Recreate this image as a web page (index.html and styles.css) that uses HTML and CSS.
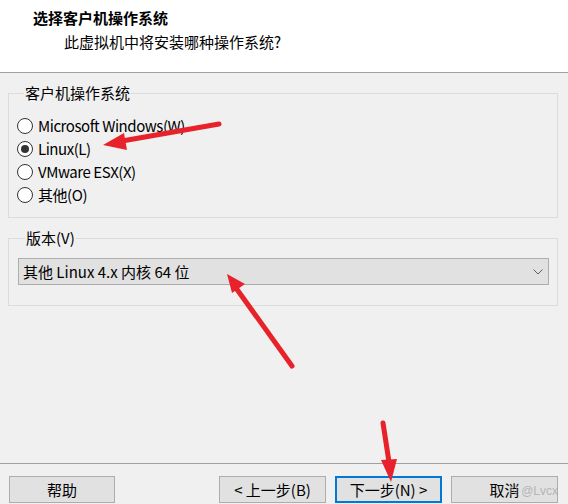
FILE: index.html
```html
<!DOCTYPE html>
<html lang="zh">
<head>
<meta charset="utf-8">
<title>选择客户机操作系统</title>
<link rel="stylesheet" href="styles.css">
</head>
<body>
<div class="page">
  <div class="header">
    <div class="title">选择客户机操作系统</div>
    <div class="subtitle">此虚拟机中将安装哪种操作系统?</div>
  </div>
  <div class="content">
    <fieldset class="group group-os">
      <legend>客户机操作系统</legend>
      <label class="radio"><span class="dot"></span><span class="lbl">Microsoft Windows(W)</span></label>
      <label class="radio"><span class="dot checked"></span><span class="lbl">Linux(L)</span></label>
      <label class="radio"><span class="dot"></span><span class="lbl">VMware ESX(X)</span></label>
      <label class="radio"><span class="dot"></span><span class="lbl">其他(O)</span></label>
    </fieldset>
    <fieldset class="group group-ver">
      <legend>版本(V)</legend>
      <div class="select">
        <span>其他 Linux 4.x 内核 64 位</span>
        <svg class="chev" width="10" height="6" viewBox="0 0 10 6"><path d="M0.5 0.5 L5 5 L9.5 0.5" fill="none" stroke="#606060" stroke-width="1"/></svg>
      </div>
    </fieldset>
  </div>
  <div class="footer">
    <button class="btn btn-help">帮助</button>
    <div class="spacer"></div>
    <button class="btn">&lt; 上一步(B)</button>
    <button class="btn btn-primary">下一步(N) &gt;</button>
    <button class="btn">取消</button>
  </div>
  <div class="watermark">N @Lvcx</div>
  <svg class="arrows" width="568" height="504" viewBox="0 0 568 504">
    <g stroke="#e8222b" stroke-width="5" stroke-linecap="round" fill="#e8222b">
      <line x1="219" y1="124" x2="122" y2="141"/>
      <line x1="292" y1="366" x2="236" y2="288"/>
      <line x1="383" y1="423" x2="389" y2="462"/>
    </g>
    <g fill="#e8222b">
      <polygon points="103,145 124,133 127,150"/>
      <polygon points="227,274 245,284 232,293"/>
      <polygon points="391,482 381,460 397,459"/>
    </g>
  </svg>
</div>
</body>
</html>
```
FILE: styles.css
```css
html, body {
  margin: 0;
  padding: 0;
}
body {
  background: #f0f0f0;
  font-family: "Noto Sans CJK SC", "Noto Sans", sans-serif;
  font-size: 15px;
  color: #000;
}
.page {
  position: relative;
  width: 568px;
  height: 504px;
  overflow: hidden;
  display: flex;
  flex-direction: column;
}
.header {
  background: #fff;
  height: 72px;
  border-bottom: 1px solid #a0a0a0;
  flex: none;
}
.title {
  font-weight: bold;
  padding: 8px 0 0 33px;
  line-height: 20px;
}
.subtitle {
  padding: 4px 0 0 64px;
  line-height: 20px;
}
.content {
  flex: 1;
  padding: 11px 10px 0 8px;
  display: flex;
  flex-direction: column;
  gap: 11px;
}
.group {
  margin: 0;
  border: 1px solid #dcdcdc;
  min-width: 0;
}
.group legend {
  padding: 0 1px;
  margin-left: 7px;
  line-height: 18px;
}
.group-os {
  padding: 12px 0 11px 8px;
  display: flex;
  flex-direction: column;
}
.radio {
  display: flex;
  align-items: center;
  height: 23px;
  gap: 5px;
}
.lbl {
  letter-spacing: -0.45px;
}
.dot {
  width: 14px;
  height: 14px;
  border: 1px solid #333;
  border-radius: 50%;
  background: #fff;
  position: relative;
  flex: none;
}
.dot.checked::after {
  content: "";
  position: absolute;
  left: 3px;
  top: 3px;
  width: 8px;
  height: 8px;
  border-radius: 50%;
  background: #333;
}
.group-ver {
  padding: 11px 8px 20px 9px;
}
.select {
  height: 25px;
  background: #e1e1e1;
  border: 1px solid #adadad;
  display: flex;
  align-items: center;
  justify-content: space-between;
  padding: 0 5px 0 4px;
}
.chev {
  display: block;
}
.footer {
  border-top: 1px solid #a0a0a0;
  height: 39px;
  flex: none;
  display: flex;
  align-items: flex-end;
  padding: 0 10px 1px 9px;
  gap: 9px;
}
.spacer {
  flex: 1;
}
.btn {
  font-family: inherit;
  font-size: 15px;
  width: 107px;
  height: 27px;
  background: #e1e1e1;
  border: 1px solid #adadad;
  padding: 0;
  color: #000;
  margin: 0;
  flex: none;
}
.btn-help {
  width: 106px;
}
.btn-primary {
  border: 2px solid #0078d7;
}
.watermark {
  position: absolute;
  right: 10px;
  bottom: 6px;
  font-family: "Liberation Sans", sans-serif;
  font-size: 12px;
  color: rgba(160, 160, 160, 0.7);
}
.arrows {
  position: absolute;
  left: 0;
  top: 0;
  pointer-events: none;
}
```
